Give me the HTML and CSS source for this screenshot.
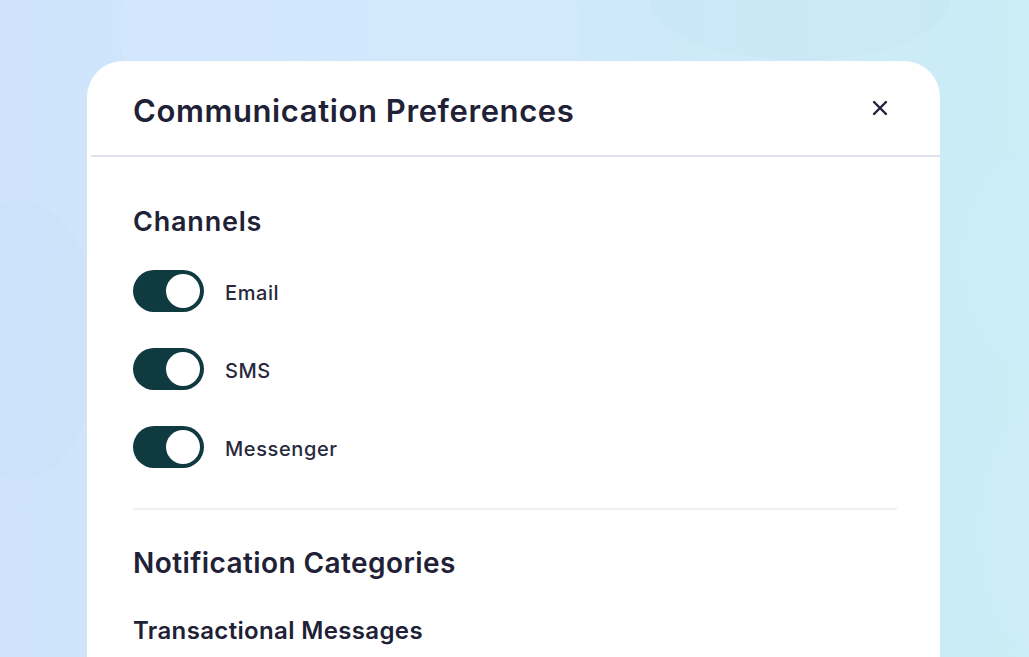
FILE: index.html
```html
<!DOCTYPE html>
<html>
<head>
<meta charset="utf-8">
<link rel="stylesheet" href="styles.css">
</head>
<body>
<div class="bg">
  <div class="blob b1"></div>
  <div class="blob b2"></div>
  <div class="blob b3"></div>
  <div class="blob b4"></div>
  <div class="blob b5"></div>
</div>
<div class="card">
  <div class="header">
    <h1 class="title">Communication Preferences</h1>
    <button class="close" aria-label="Close">
      <svg width="18" height="18" viewBox="0 0 18 18"><path d="M3 3 L15 15 M15 3 L3 15" stroke="#22253a" stroke-width="2.4" stroke-linecap="round"/></svg>
    </button>
  </div>
  <div class="body">
    <h2 class="section">Channels</h2>
    <div class="toggles">
      <div class="row"><span class="toggle"><span class="knob"></span></span><span class="label">Email</span></div>
      <div class="row"><span class="toggle"><span class="knob"></span></span><span class="label">SMS</span></div>
      <div class="row"><span class="toggle"><span class="knob"></span></span><span class="label">Messenger</span></div>
    </div>
    <hr class="divider">
    <h2 class="section cat">Notification Categories</h2>
    <h3 class="sub">Transactional Messages</h3>
  </div>
</div>
</body>
</html>
```
FILE: styles.css
```css
html, body { margin: 0; padding: 0; height: 100%; overflow: hidden; }
body {
  font-family: "Inter", "Noto Sans", sans-serif;
  background: linear-gradient(90deg, #cfe4fc 0%, #cfe8fa 50%, #caedf6 100%);
  position: relative;
}
.bg { position: absolute; inset: 0; overflow: hidden; }
.blob { position: absolute; border-radius: 50%; }
.b1 { left: 120px; top: -40px; width: 460px; height: 140px; border-radius: 60px; background: rgba(220, 235, 255, 0.3); }
.b2 { left: -60px; top: 200px; width: 160px; height: 280px; background: rgba(190, 215, 240, 0.12); }
.b3 { left: 650px; top: -60px; width: 300px; height: 120px; background: rgba(190, 220, 238, 0.15); }
.b4 { left: 960px; top: 150px; width: 160px; height: 220px; background: rgba(205, 240, 250, 0.3); }
.b5 { left: 980px; top: 400px; width: 140px; height: 260px; background: rgba(210, 240, 250, 0.25); }
.card {
  position: relative;
  margin: 61px 0 0 87px;
  width: 853px;
  height: 640px;
  background: #ffffff;
  border-radius: 36px 36px 0 0;
}
.header {
  margin-left: 4px;
  height: 94px;
  border-bottom: 2px solid #e1e1eb;
  display: flex;
  align-items: center;
  justify-content: space-between;
  padding: 0 43px 0 42px;
}
.title {
  margin: 0;
  font-size: 31px;
  font-weight: 600;
  color: #1f2236;
  letter-spacing: 0.6px;
  line-height: 36px;
  padding-top: 6px;
}
.close {
  border: 0; background: none; padding: 0; width: 18px; height: 18px;
  display: flex; margin-top: 0; margin-right: 8px;
}
.body { padding: 49px 43px 0 46px; }
.section {
  margin: 0;
  font-size: 27px;
  font-weight: 600;
  color: #1f2236;
  line-height: 32px;
  letter-spacing: 0.8px;
}
.toggles { display: flex; flex-direction: column; gap: 36px; margin-top: 32px; }
.row { display: flex; align-items: center; gap: 21px; height: 42px; }
.toggle {
  width: 71px; height: 42px; border-radius: 21px; background: #0f3a40;
  display: flex; align-items: center; justify-content: flex-end; padding-right: 4px; box-sizing: border-box;
}
.knob { width: 34px; height: 34px; border-radius: 50%; background: #fff; }
.label { font-size: 20px; font-weight: 500; color: #272a3c; letter-spacing: 0.6px; padding-top: 3px; }
.divider { border: 0; height: 2px; background: #eeeef4; margin: 40px 0 0 0; }
.cat { margin-top: 36px; font-size: 28px; line-height: 34px; letter-spacing: 0.42px; }
.sub { margin: 36px 0 0; font-size: 24px; font-weight: 600; color: #1f2236; line-height: 30px; letter-spacing: 0.35px; }
```
